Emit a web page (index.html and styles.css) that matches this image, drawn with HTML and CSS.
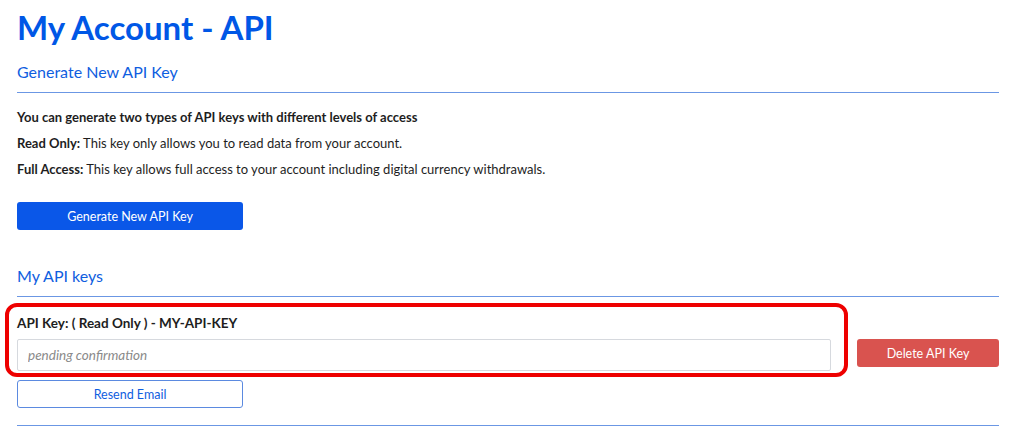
FILE: index.html
```html
<!DOCTYPE html>
<html lang="en">
<head>
  <meta charset="UTF-8">
  <title>My Account - API</title>
  <link rel="stylesheet" href="styles.css">
</head>
<body>

<h1 class="page-title">My Account - API</h1>

<div class="section">
  <h2 class="section-title">Generate New API Key</h2>
  <p class="lead">You can generate two types of API keys with different levels of access</p>
  <p><b>Read Only:</b> This key only allows you to read data from your account.</p>
  <p><b>Full Access:</b> This key allows full access to your account including digital currency withdrawals.</p>
  <button class="btn btn-primary">Generate New API Key</button>
</div>

<div class="section">
  <h2 class="section-title">My API keys</h2>
  <div class="key-item">
    <div class="key-row">
      <div class="key-field">
        <label class="key-label">API Key: ( Read Only ) - MY-API-KEY</label>
        <input class="key-input" type="text" placeholder="pending confirmation" readonly>
        <div class="highlight"></div>
      </div>
      <button class="btn btn-danger">Delete API Key</button>
    </div>
    <button class="btn btn-outline">Resend Email</button>
  </div>
</div>

</body>
</html>
```

FILE: styles.css
```css
body {
  margin: 0;
  padding: 0 16px 0 17px;
  font-family: Lato, "Liberation Sans", sans-serif;
  font-size: 13px;
  color: #1e1e1e;
  background: #fff;
}
.page-title {
  margin: 7px 0 0;
  font-size: 33px;
  line-height: 40px;
  color: #0057e6;
}
.section-title {
  margin: 0;
  padding: 14px 0 9px;
  font-size: 16px;
  font-weight: normal;
  line-height: 22px;
  color: #0f5ee0;
  border-bottom: 1px solid #6b97e4;
}
.section p {
  margin: 0 0 10px;
  line-height: 16px;
}
.section p.lead {
  margin-top: 16px;
  font-weight: bold;
}
.btn {
  display: block;
  box-sizing: border-box;
  height: 28px;
  padding: 0 10px;
  font-family: inherit;
  font-size: 12.5px;
  border-radius: 3px;
  cursor: pointer;
}
.btn-primary {
  width: 226px;
  margin-top: 25px;
  margin-bottom: 21px;
  background: #0a57e8;
  color: #fff;
  border: none;
}
.key-item {
  padding: 18px 0 17px;
  border-bottom: 1px solid #6b97e4;
}
.key-row {
  display: flex;
  align-items: flex-end;
  gap: 26px;
}
.key-field {
  position: relative;
  flex: 1;
}
.key-label {
  display: block;
  margin-bottom: 8px;
  font-size: 13.5px;
  font-weight: bold;
  line-height: 16px;
}
.key-input {
  display: block;
  box-sizing: border-box;
  width: 100%;
  height: 32px;
  padding: 0 10px;
  font-family: inherit;
  font-size: 13.5px;
  border: 1px solid #d6d9de;
  border-radius: 2px;
}
.key-input::placeholder {
  color: #8a8a8a;
  font-style: italic;
}
.highlight {
  position: absolute;
  left: -12px;
  top: -12px;
  right: -17px;
  bottom: -6px;
  border: 4px solid #ee0000;
  border-radius: 12px;
  pointer-events: none;
}
.btn-danger {
  width: 142px;
  margin-bottom: 4px;
  background: #d9534f;
  color: #fff;
  border: none;
}
.btn-outline {
  width: 226px;
  margin-top: 9px;
  background: #fff;
  color: #0f5ee0;
  border: 1px solid #5b8ae0;
}
```
